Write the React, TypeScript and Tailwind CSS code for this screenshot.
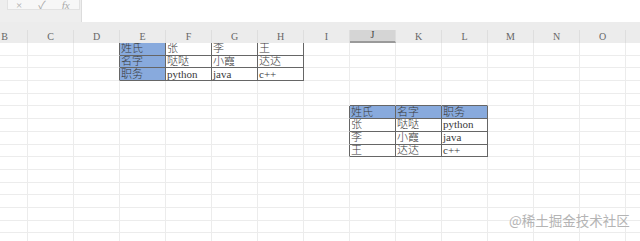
import React from 'react';

const cols = ['B', 'C', 'D', 'E', 'F', 'G', 'H', 'I', 'J', 'K', 'L', 'M', 'N', 'O', ''];
const rowCount = 16;

interface Cell {
  text: string;
  blue?: boolean;
}

// cells keyed by "row-col" (col index into cols)
const cells: Record<string, Cell> = {
  '0-3': { text: '姓氏', blue: true },
  '0-4': { text: '张' },
  '0-5': { text: '李' },
  '0-6': { text: '王' },
  '1-3': { text: '名字', blue: true },
  '1-4': { text: '哒哒' },
  '1-5': { text: '小霞' },
  '1-6': { text: '达达' },
  '2-3': { text: '职务', blue: true },
  '2-4': { text: 'python' },
  '2-5': { text: 'java' },
  '2-6': { text: 'c++' },
  '5-8': { text: '姓氏', blue: true },
  '5-9': { text: '名字', blue: true },
  '5-10': { text: '职务', blue: true },
  '6-8': { text: '张' },
  '6-9': { text: '哒哒' },
  '6-10': { text: 'python' },
  '7-8': { text: '李' },
  '7-9': { text: '小霞' },
  '7-10': { text: 'java' },
  '8-8': { text: '王' },
  '8-9': { text: '达达' },
  '8-10': { text: 'c++' },
};

const inTable = (r: number, c: number) => !!cells[`${r}-${c}`];

const font = { fontFamily: '"Liberation Serif", "Noto Sans CJK SC", serif' };

export default function App() {
  return (
    <div className="relative w-[640px] h-[241px] overflow-hidden bg-white" style={font}>
      {/* formula bar */}
      <div className="flex h-[22px]">
        <div className="w-[82px] bg-[#eeeeee] border-r border-[#dcdcdc] pl-[7px]">
          <div className="flex items-end gap-[16px] w-[73px] h-[11px] -mt-[1px] bg-[#f7f7f7] border border-[#e2e2e2] pl-[8px] text-[11px] leading-none text-[#aaaaaa] overflow-hidden">
            <span className="-mb-[2px]">×</span>
            <span className="-mb-[2px]">✓</span>
            <span className="-mb-[2px] italic">fx</span>
          </div>
        </div>
        <div className="flex-1 bg-white" />
      </div>
      <div className="h-[8px] bg-[#ececec]" />

      {/* column headers */}
      <div className="flex h-[13px] -ml-[18px] bg-[#ececec]">
        {cols.map((c, i) => (
          <div
            key={i}
            className={`w-[46px] shrink-0 flex items-end justify-center text-[10px] leading-none pb-[1px] border-r border-[#dedede] ${
              c === 'J' ? 'bg-[#d5d5d5] border-b-2 border-b-[#9a9a9a] text-[#444]' : 'text-[#666]'
            }`}
          >
            {c}
          </div>
        ))}
      </div>

      {/* grid */}
      <div className="-ml-[18px]">
        {Array.from({ length: rowCount }).map((_, r) => (
          <div key={r} className="flex h-[12.7px]">
            {cols.map((_c, ci) => {
              const cell = cells[`${r}-${ci}`];
              const darkRight = inTable(r, ci) || inTable(r, ci + 1);
              const darkBottom = inTable(r, ci) || inTable(r + 1, ci);
              return (
                <div
                  key={ci}
                  className={`w-[46px] shrink-0 border-r border-b flex items-center pl-[1px] text-[11px] font-light leading-none text-[#3a3a3a] overflow-hidden whitespace-nowrap ${
                    darkRight ? 'border-r-[#666]' : 'border-r-[#ececec]'
                  } ${darkBottom ? 'border-b-[#666]' : 'border-b-[#ececec]'} ${
                    cell?.blue ? 'bg-[#88aadd]' : ''
                  }`}
                >
                  {cell?.text}
                </div>
              );
            })}
          </div>
        ))}
      </div>

      {/* watermark */}
      <div
        className="absolute left-[509px] top-[214px] text-[13.5px] leading-none text-[#b4b4b4]"
        style={{ fontFamily: '"Noto Sans CJK SC", sans-serif' }}
      >
        @稀土掘金技术社区
      </div>
    </div>
  );
}
